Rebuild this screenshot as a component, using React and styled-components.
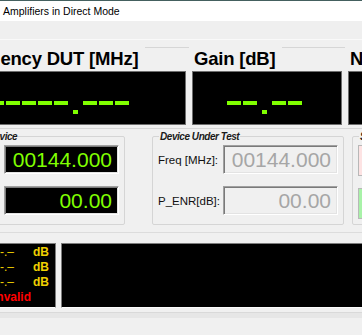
import React from 'react';
import styled, { createGlobalStyle } from 'styled-components';

const GlobalStyle = createGlobalStyle`
  html, body { margin: 0; padding: 0; background: #f0f0f0; overflow: hidden; }
  body { font-family: "Liberation Sans", Arial, sans-serif; }
  #root { width: 362px; height: 335px; overflow: hidden; }
`;

const Frame = styled.div`
  width: 362px;
  height: 335px;
  overflow: hidden;
  background: #f0f0f0;
  display: flex;
  flex-direction: column;
`;

const TitleBar = styled.div`
  flex-shrink: 0;
  height: 20px;
  border-top: 1px solid #44605f;
  background: #ffffff;
  display: flex;
  align-items: center;
  padding-left: 3px;
  font-size: 10.5px;
  color: #000;
`;

const MenuStrip = styled.div`
  flex-shrink: 0;
  height: 18px;
  background: #efefef;
  border-bottom: 1px solid #f9f9f9;
`;

const Body = styled.div`
  flex-shrink: 0;
  width: 700px;
  margin-left: -75px;
  padding-top: 7px;
`;

const TopGroup = styled.div`
  display: flex;
  gap: 6px;
  padding-left: 23px;
  padding-bottom: 3px;
  border-top: 1px solid #d6d6d6;
  border-bottom: 1px solid #d6d6d6;
`;

const Column = styled.div`
  display: flex;
  flex-direction: column;
  width: ${p => p.$w}px;
`;

const BigLabel = styled.div`
  align-self: flex-start;
  margin-top: -1px;
  margin-left: -3px;
  padding: 0 7px 0 5px;
  height: 24px;
  line-height: 24px;
  background: #f0f0f0;
  font-size: 18.5px;
  font-weight: bold;
  letter-spacing: -0.2px;
  color: #000;
  white-space: nowrap;
`;

const Display = styled.div`
  height: 52px;
  background: #000;
  border: 1px solid #6e6e6e;
  display: flex;
  align-items: flex-start;
  padding-left: ${p => p.$pad}px;
`;

const Dash = styled.span`
  flex-shrink: 0;
  width: 14px;
  height: 4px;
  margin: 29px 2px 0 0;
  background: #80ff00;
`;

const Dot = styled.span`
  flex-shrink: 0;
  width: 5px;
  height: 4px;
  margin: 38px 5px 0 3px;
  background: #80ff00;
`;

const Middle = styled.div`
  display: flex;
  padding: 7px 0 7px 8px;
  border-bottom: 1px solid #dcdcdc;
`;

const GroupBox = styled.div`
  position: relative;
  flex-shrink: 0;
  width: ${p => p.$w}px;
  height: 79px;
  margin-right: ${p => p.$gap}px;
  border: 1px solid #d5d5d5;
  border-radius: 2px;
  padding: 8px 5px 0 5px;
  box-sizing: content-box;
  display: flex;
  flex-direction: column;
  gap: 12px;
`;

const Legend = styled.span`
  position: absolute;
  top: -6px;
  left: 6px;
  padding: 0 1px;
  background: #f0f0f0;
  font-size: 10px;
  line-height: 12px;
  font-weight: bold;
  font-style: italic;
  letter-spacing: -0.45px;
  color: #1a1a1a;
  white-space: nowrap;
`;

const FieldRow = styled.div`
  display: flex;
  align-items: center;
  height: 29px;
`;

const FieldLabel = styled.span`
  width: 66px;
  font-size: 11.5px;
  color: #111;
  white-space: nowrap;
`;

const Field = styled.div`
  box-sizing: border-box;
  width: 116px;
  height: 29px;
  display: flex;
  align-items: center;
  justify-content: flex-end;
  padding-right: 6px;
  border: 1px solid;
  border-color: #a0a0a0 #ffffff #ffffff #a0a0a0;
  box-shadow: inset 1px 1px 0 #7a7a7a, inset -1px -1px 0 #e3e3e3;
  background: ${p => (p.$live ? '#000' : '#f0f0f0')};
  color: ${p => (p.$live ? '#80ff00' : '#a6a6a6')};
  font-size: 21px;
  white-space: nowrap;
`;

const Indicator = styled.div`
  width: 60px;
  height: 29px;
  border: 1px solid #b8b8b8;
  background: ${p => p.$color};
`;

const Bottom = styled.div`
  display: flex;
  gap: 5px;
  padding: 10px 0 0 8px;
`;

const Panel = styled.div`
  box-sizing: border-box;
  width: ${p => p.$w}px;
  height: 65px;
  background: #000;
  border: 1px solid #7c7c7c;
  border-bottom-color: #fcfcfc;
  padding-top: 1px;
  display: flex;
  flex-direction: column;
`;

const ResultRow = styled.div`
  display: flex;
  height: 15px;
  line-height: 15px;
  font-size: 12px;
  white-space: nowrap;
`;

const ResultValue = styled.span`
  width: 80px;
  text-align: right;
  color: #f0d000;
`;

const ResultUnit = styled.span`
  margin-left: 19px;
  font-weight: bold;
  color: #f0d000;
`;

const Invalid = styled.span`
  margin-left: 59px;
  font-weight: bold;
  color: #ff0000;
`;

const StatusStrip = styled.div`
  margin-top: 4px;
  height: 30px;
  border-top: 1px solid #d9d9d9;
  background: linear-gradient(#e6e6e6 0, #e6e6e6 5px, #f0f0f0 5px);
`;

const Segments = ({ text }) => (
  <>
    {text.split('').map((c, i) => (c === '.' ? <Dot key={i} /> : <Dash key={i} />))}
  </>
);

const results = ['-.–', '-.–', '-.–'];

export default function App() {
  return (
    <Frame>
      <GlobalStyle />
      <TitleBar>Amplifiers in Direct Mode</TitleBar>
      <MenuStrip />
      <Body>
        <TopGroup>
          <Column $w={238}>
            <BigLabel>Frequency DUT [MHz]</BigLabel>
            <Display $pad={25}><Segments text="------.---" /></Display>
          </Column>
          <Column $w={150}>
            <BigLabel>Gain [dB]</BigLabel>
            <Display $pad={34}><Segments text="--.--" /></Display>
          </Column>
          <Column $w={150}>
            <BigLabel>Noise Figure [dB]</BigLabel>
            <Display $pad={34} />
          </Column>
        </TopGroup>
        <Middle>
          <GroupBox $w={180} $gap={27}>
            <Legend>Reference Device</Legend>
            <FieldRow>
              <FieldLabel>Freq [MHz]:</FieldLabel>
              <Field $live>00144.000</Field>
            </FieldRow>
            <FieldRow>
              <FieldLabel>ENR [dB]:</FieldLabel>
              <Field $live>00.00</Field>
            </FieldRow>
          </GroupBox>
          <GroupBox $w={180} $gap={8}>
            <Legend>Device Under Test</Legend>
            <FieldRow>
              <FieldLabel>Freq [MHz]:</FieldLabel>
              <Field>00144.000</Field>
            </FieldRow>
            <FieldRow>
              <FieldLabel>P_ENR[dB]:</FieldLabel>
              <Field>00.00</Field>
            </FieldRow>
          </GroupBox>
          <GroupBox $w={120} $gap={8}>
            <Legend>Status</Legend>
            <Indicator $color="#fde3e3" />
            <Indicator $color="#a8f2a8" />
          </GroupBox>
        </Middle>
        <Bottom>
          <Panel $w={123}>
            {results.map((r, i) => (
              <ResultRow key={i}>
                <ResultValue>{r}</ResultValue>
                <ResultUnit>dB</ResultUnit>
              </ResultRow>
            ))}
            <ResultRow>
              <Invalid>Invalid</Invalid>
            </ResultRow>
          </Panel>
          <Panel $w={500} />
        </Bottom>
        <StatusStrip />
      </Body>
    </Frame>
  );
}
